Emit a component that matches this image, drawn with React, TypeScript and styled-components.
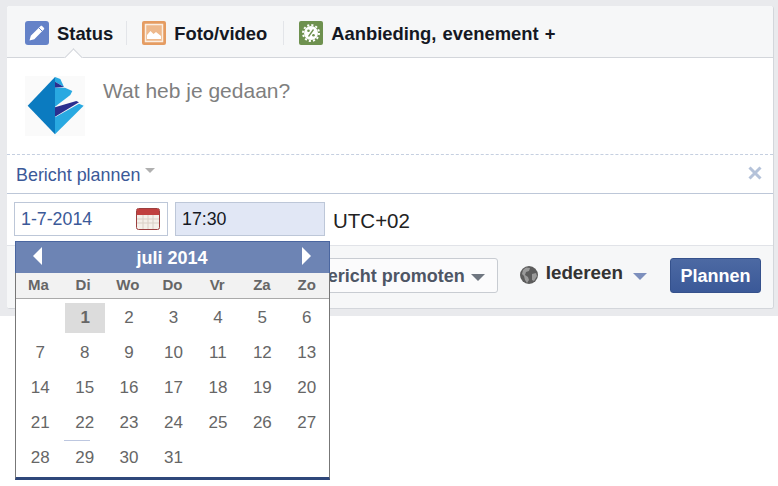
import React from 'react';
import styled, {createGlobalStyle} from 'styled-components';

const GlobalStyle = createGlobalStyle`
  html, body {
    margin: 0;
    padding: 0;
    background: #fff;
    font-family: "Liberation Sans", Arial, sans-serif;
  }
`;

const weekDays = ['Ma', 'Di', 'Wo', 'Do', 'Vr', 'Za', 'Zo'];
// juli 2014 starts on a Tuesday, so one empty cell first
const days = [0, ...Array.from({length: 31}, (_, i) => i + 1)];

const PencilIcon = () => (
  <svg width="24" height="24" viewBox="0 0 24 24">
    <rect width="24" height="24" rx="3" fill="#6482c8" />
    <path d="M4.5 19.5l1.3-4.8L15.4 5.2c.6-.6 1.3-.6 1.9 0l1.5 1.5c.6.6.6 1.3 0 1.9l-9.5 9.6z" fill="#fff" />
    <path d="M13.8 6.8l3.4 3.4" stroke="#6482c8" strokeWidth="1" />
  </svg>
);

const PhotoIcon = () => (
  <svg width="24" height="24" viewBox="0 0 24 24">
    <rect width="24" height="24" rx="2" fill="#e59c62" />
    <rect x="3.5" y="3.5" width="17" height="17" fill="#eeb98c" stroke="#fbeee2" strokeWidth="1.5" />
    <path d="M5 18v-4l3.5-4 3 3 2.5-2 5 4v3z" fill="#fff" />
  </svg>
);

const OfferIcon = () => (
  <svg width="24" height="24" viewBox="0 0 24 24">
    <rect width="24" height="24" rx="2" fill="#6e914f" />
    <circle cx="12" cy="12" r="7" fill="#fff" />
    <circle cx="12" cy="12" r="8" fill="none" stroke="#fff" strokeWidth="2" strokeDasharray="2.1 2.1" />
    <path d="M14.5 8.5l-5 7" stroke="#6e914f" strokeWidth="1.3" />
    <circle cx="9.5" cy="9.8" r="1.3" fill="#6e914f" />
    <circle cx="14.5" cy="14.2" r="1.3" fill="#6e914f" />
  </svg>
);

const BrandLogo = () => (
  <svg width="60" height="60" viewBox="30 33 180 180">
    <rect x="30" y="33" width="180" height="180" fill="#fafafa" />
    <polygon points="120,36 120,208 38,122" fill="#0b7bc0" />
    <polygon points="120,36 136,42 147,66 120,50" fill="#29a9e1" />
    <polygon points="120,50 147,66 120,68" fill="#2b2f8f" />
    <polygon points="120,68 150,68 172,78 166,90 120,125" fill="#29a9e1" />
    <polygon points="120,127 184,108 192,112 120,155" fill="#2b2f8f" />
    <polygon points="120,157 192,116 206,122 120,208" fill="#29a9e1" />
  </svg>
);

const CalendarIcon = () => (
  <svg width="24" height="22" viewBox="0 0 24 22">
    <rect x="0.5" y="0.5" width="23" height="21" rx="2" fill="#f4efe9" stroke="#9c3f3f" />
    <rect x="1" y="1" width="22" height="6" fill="#c0403f" />
    <path d="M1 11h22M1 15h22M7 7v14M12 7v14M17 7v14" stroke="#d9cfc6" strokeWidth="1" />
  </svg>
);

const GlobeIcon = () => (
  <svg width="18" height="18" viewBox="0 0 18 18">
    <circle cx="9" cy="9" r="9" fill="#5c5c5c" />
    <path d="M6 1.5l4 .5-1 3-3 1-1 3 3 2 1 3-2 3-2-3-1-4-2-2 1-4zM12 8l4-1 1 3-3 5-2-1z" fill="#9a9a9a" />
  </svg>
);

const CloseIcon = () => (
  <svg width="14" height="14" viewBox="0 0 14 14">
    <path d="M1.5 1.5l11 11M12.5 1.5l-11 11" stroke="#b4c2d9" strokeWidth="3" />
  </svg>
);

export default function App() {
  return (
    <Page>
      <GlobalStyle />
      <Backdrop>
        <Card>
          <Tabs>
            <Tab>
              <PencilIcon />
              <TabLabel>Status</TabLabel>
            </Tab>
            <TabDivider $left={13} />
            <Tab>
              <PhotoIcon />
              <TabLabel>Foto/video</TabLabel>
            </Tab>
            <TabDivider $left={16} />
            <Tab>
              <OfferIcon />
              <TabLabel>Aanbieding, evenement +</TabLabel>
            </Tab>
            <Notch />
          </Tabs>

          <Composer>
            <BrandLogo />
            <Placeholder>Wat heb je gedaan?</Placeholder>
          </Composer>

          <ScheduleBar>
            <ScheduleLabel>Bericht plannen</ScheduleLabel>
            <ScheduleCaret />
            <CloseSlot>
              <CloseIcon />
            </CloseSlot>
          </ScheduleBar>

          <DateRow>
            <DateField>
              1-7-2014
              <CalendarIcon />
            </DateField>
            <TimeField>17:30</TimeField>
            <ZoneLabel>UTC+02</ZoneLabel>
          </DateRow>

          <Footer>
            <PromoteButton>
              Bericht promoten
              <Caret $color="#6f7680" />
            </PromoteButton>
            <Audience>
              <GlobeIcon />
              <AudienceLabel>Iedereen</AudienceLabel>
              <Caret $color="#7d8fbd" />
            </Audience>
            <PlanButton>Plannen</PlanButton>
          </Footer>
        </Card>
      </Backdrop>

      <Calendar>
        <MonthBar>
          <MonthArrow $direction="left" />
          <MonthLabel>juli 2014</MonthLabel>
          <MonthArrow $direction="right" />
        </MonthBar>
        <WeekRow>
          {weekDays.map(day => (
            <WeekDay key={day}>{day}</WeekDay>
          ))}
        </WeekRow>
        <DayGrid>
          {days.map((day, index) => (
            <DayCell key={index} $selected={day === 1} $marked={day === 29}>
              {day || ''}
            </DayCell>
          ))}
        </DayGrid>
      </Calendar>
    </Page>
  );
}

const Page = styled.div`
  position: relative;
  width: 778px;
  height: 486px;
  overflow: hidden;
  background: #fff;
`;

const Backdrop = styled.div`
  box-sizing: border-box;
  height: 316px;
  padding: 6px 4px 0 7px;
  background: #e9eaed;
`;

const Card = styled.div`
  box-sizing: border-box;
  height: 303px;
  display: flex;
  flex-direction: column;
  background: #fff;
  border-right: 1px solid #d3d6db;
  border-bottom: 1px solid #d3d6db;
  border-radius: 3px;
  overflow: hidden;
`;

const Tabs = styled.div`
  position: relative;
  box-sizing: border-box;
  height: 52px;
  flex: none;
  display: flex;
  align-items: center;
  padding: 2px 0 0 18px;
  background: #f6f7f8;
  border-bottom: 1px solid #d3d6db;
`;

const Tab = styled.div`
  display: flex;
  align-items: center;
  gap: 8px;
`;

const TabLabel = styled.span`
  margin-top: 2px;
  font-size: 18.4px;
  font-weight: bold;
  word-spacing: 1px;
  color: #141823;
`;

const TabDivider = styled.div<{$left: number}>`
  width: 1px;
  height: 24px;
  margin: 0 15px 0 ${props => props.$left}px;
  background: #e3e5e9;
`;

const Notch = styled.div`
  position: absolute;
  left: 60px;
  bottom: -7px;
  width: 12px;
  height: 12px;
  background: #fff;
  border-top: 1px solid #d3d6db;
  border-left: 1px solid #d3d6db;
  transform: rotate(45deg);
`;

const Composer = styled.div`
  box-sizing: border-box;
  height: 97px;
  flex: none;
  display: flex;
  align-items: flex-start;
  gap: 18px;
  padding: 18px 0 0 18px;
  border-bottom: 1px dashed #c5cfe0;
`;

const Placeholder = styled.div`
  margin-top: 3px;
  font-size: 21px;
  color: #7f7f7f;
`;

const ScheduleBar = styled.div`
  box-sizing: border-box;
  height: 39px;
  flex: none;
  display: flex;
  align-items: center;
  padding: 0 11px 0 9px;
  border-bottom: 1px solid #bdc7d8;
`;

const ScheduleLabel = styled.span`
  margin-top: 2px;
  font-size: 17.9px;
  color: #3b5998;
`;

const ScheduleCaret = styled.span`
  margin: -7px 0 0 5px;
  border-left: 5px solid transparent;
  border-right: 5px solid transparent;
  border-top: 5px solid #b0b0b0;
`;

const CloseSlot = styled.span`
  display: flex;
  margin: -2px 0 0 auto;
`;

const DateRow = styled.div`
  box-sizing: border-box;
  height: 51px;
  flex: none;
  display: flex;
  align-items: flex-start;
  padding: 8px 0 0 7px;
`;

const DateField = styled.div`
  box-sizing: border-box;
  width: 154px;
  height: 34px;
  display: flex;
  align-items: center;
  justify-content: space-between;
  padding: 0 7px 0 6px;
  border: 1px solid #bdc7d8;
  font-size: 17.8px;
  color: #3b5998;
`;

const TimeField = styled.div`
  box-sizing: border-box;
  width: 150px;
  height: 34px;
  margin-left: 7px;
  display: flex;
  align-items: center;
  padding: 0 6px;
  background: #e1e7f5;
  border: 1px solid #bdc7d8;
  font-size: 17.8px;
  color: #141823;
`;

const ZoneLabel = styled.span`
  margin: 7px 0 0 8px;
  font-size: 20.5px;
  color: #222;
`;

const Footer = styled.div`
  flex: 1;
  display: flex;
  align-items: center;
  justify-content: flex-end;
  padding: 0 12px 4px 0;
  background: #f6f7f8;
  border-top: 1px solid #e1e3e8;
`;

const PromoteButton = styled.div`
  box-sizing: border-box;
  height: 35px;
  display: flex;
  align-items: center;
  gap: 6px;
  padding: 2px 12px 0;
  background: #fbfbfc;
  border: 1px solid #c8ccd2;
  border-radius: 3px;
  font-size: 18px;
  font-weight: bold;
  color: #4e5665;
`;

const Caret = styled.span<{$color: string}>`
  margin-top: 2px;
  border-left: 7px solid transparent;
  border-right: 7px solid transparent;
  border-top: 7px solid ${props => props.$color};
`;

const Audience = styled.div`
  display: flex;
  align-items: center;
  margin: 0 23px 0 22px;
`;

const AudienceLabel = styled.span`
  margin: -5px 10px 0 8px;
  font-size: 18.8px;
  font-weight: bold;
  color: #333;
`;

const PlanButton = styled.div`
  box-sizing: border-box;
  width: 91px;
  height: 35px;
  display: flex;
  align-items: center;
  justify-content: center;
  padding-top: 2px;
  background: linear-gradient(#4c69a3, #3b5998);
  border: 1px solid #35518c;
  border-radius: 3px;
  font-size: 18px;
  font-weight: bold;
  color: #fff;
`;

const Calendar = styled.div`
  position: absolute;
  left: 15px;
  top: 241px;
  box-sizing: border-box;
  width: 315px;
  height: 239px;
  display: flex;
  flex-direction: column;
  background: #fff;
  border: 1px solid #777;
  border-top: none;
  border-bottom: 3px solid #2f477a;
`;

const MonthBar = styled.div`
  box-sizing: border-box;
  height: 32px;
  margin: 0 -1px;
  display: flex;
  align-items: center;
  justify-content: space-between;
  padding: 0 18px 0 17px;
  background: #6d84b4;
  border: 1px solid #4a66a0;
  border-bottom: none;
`;

const MonthLabel = styled.span`
  margin-top: 2px;
  font-size: 18px;
  font-weight: bold;
  color: #fff;
`;

const MonthArrow = styled.span<{$direction: 'left' | 'right'}>`
  margin-top: -3px;
  border-top: 9px solid transparent;
  border-bottom: 9px solid transparent;
  ${props =>
    props.$direction === 'left'
      ? 'border-right: 9px solid #fff;'
      : 'border-left: 9px solid #fff;'}
`;

const WeekRow = styled.div`
  box-sizing: border-box;
  height: 26px;
  display: grid;
  grid-template-columns: repeat(7, 1fr);
  align-items: center;
  background: #f2f2f2;
  border-bottom: 1px solid #aaa;
`;

const WeekDay = styled.span`
  padding-bottom: 2px;
  text-align: center;
  font-size: 15px;
  font-weight: bold;
  color: #666;
`;

const DayGrid = styled.div`
  display: grid;
  grid-template-columns: repeat(7, 1fr);
  grid-auto-rows: 35px;
  padding: 1px 0 0 2px;
`;

const DayCell = styled.div<{$selected?: boolean; $marked?: boolean}>`
  position: relative;
  display: flex;
  align-items: center;
  justify-content: center;
  font-size: 17px;
  font-weight: ${props => (props.$selected ? 'bold' : 'normal')};
  color: #666;

  ${props =>
    props.$selected &&
    `
    margin: 3px 2px 2px 3px;
    background: #dcdcdc;
  `}

  ${props =>
    props.$marked &&
    `
    &::after {
      content: '';
      position: absolute;
      left: 2px;
      top: 0;
      width: 26px;
      height: 1px;
      background: #bdc7e0;
    }
  `}
`;
